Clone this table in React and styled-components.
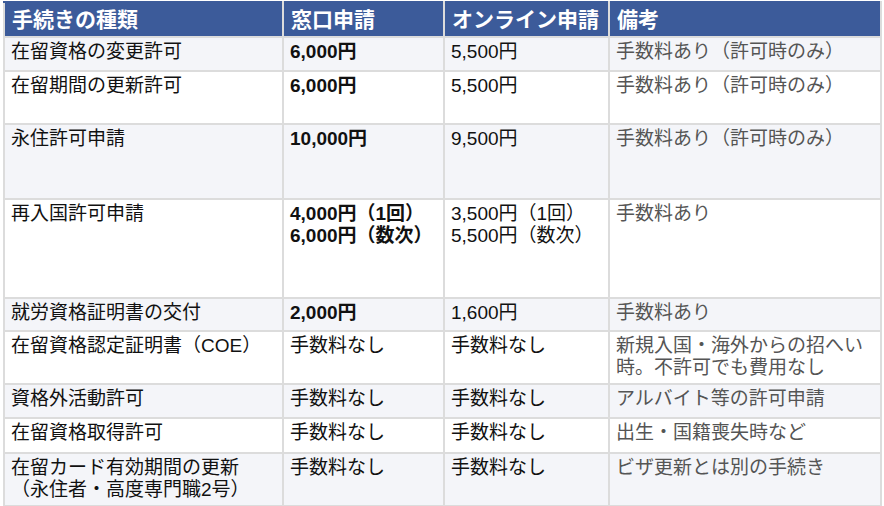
import React from 'react';
import styled, { createGlobalStyle } from 'styled-components';

const GlobalStyle = createGlobalStyle`
  html, body {
    margin: 0;
    padding: 0;
    background: #ffffff;
  }
  body {
    font-family: "Liberation Sans", "Noto Sans CJK JP", sans-serif;
  }
`;

const Wrapper = styled.div`
  padding: 1px 0 0 3px;
`;

const Table = styled.table`
  border-collapse: collapse;
  table-layout: fixed;
  width: 877px;
`;

const Col = styled.col`
  width: ${props => props.w}px;
`;

const HeadCell = styled.th`
  background: #3c5b9a;
  color: #ffffff;
  font-size: 21px;
  font-weight: 700;
  text-align: left;
  vertical-align: middle;
  padding: 0 5px 0 7px;
  border: 2px solid #dcdcdc;
  border-top-color: #3c5b9a;
  line-height: 24px;
  white-space: nowrap;
`;

const Row = styled.tr`
  height: ${props => props.h}px;
  background: ${props => (props.alt ? '#f4f5f9' : '#ffffff')};
`;

const Cell = styled.td`
  border: 2px solid #dcdcdc;
  padding: 3px 4px 0 6px;
  vertical-align: top;
  font-size: 19px;
  line-height: 22px;
  color: ${props => (props.note ? '#555555' : '#111111')};
  font-weight: ${props => (props.bold ? 700 : 400)};
`;

const rows = [
  { h: 34, name: ['在留資格の変更許可'], counter: ['6,000円'], online: ['5,500円'], note: ['手数料あり（許可時のみ）'] },
  { h: 53, name: ['在留期間の更新許可'], counter: ['6,000円'], online: ['5,500円'], note: ['手数料あり（許可時のみ）'] },
  { h: 75, name: ['永住許可申請'], counter: ['10,000円'], online: ['9,500円'], note: ['手数料あり（許可時のみ）'] },
  { h: 99, name: ['再入国許可申請'], counter: ['4,000円（1回）', '6,000円（数次）'], online: ['3,500円（1回）', '5,500円（数次）'], note: ['手数料あり'] },
  { h: 33, name: ['就労資格証明書の交付'], counter: ['2,000円'], online: ['1,600円'], note: ['手数料あり'] },
  { h: 53, name: ['在留資格認定証明書（COE）'], counter: ['手数料なし'], online: ['手数料なし'], note: ['新規入国・海外からの招へい', '時。不許可でも費用なし'], plainCounter: true },
  { h: 34, name: ['資格外活動許可'], counter: ['手数料なし'], online: ['手数料なし'], note: ['アルバイト等の許可申請'], plainCounter: true },
  { h: 35, name: ['在留資格取得許可'], counter: ['手数料なし'], online: ['手数料なし'], note: ['出生・国籍喪失時など'], plainCounter: true },
  { h: 53, name: ['在留カード有効期間の更新', '（永住者・高度専門職2号）'], counter: ['手数料なし'], online: ['手数料なし'], note: ['ビザ更新とは別の手続き'], plainCounter: true },
];

const Lines = ({ items }) =>
  items.map((t, i) => (
    <React.Fragment key={i}>
      {i > 0 && <br />}
      {t}
    </React.Fragment>
  ));

const App = () => {
  return (
    <Wrapper>
      <GlobalStyle />
      <Table>
        <colgroup>
          <Col w={279} />
          <Col w={161} />
          <Col w={165} />
          <Col w={272} />
        </colgroup>
        <thead>
          <Row h={35}>
            <HeadCell>手続きの種類</HeadCell>
            <HeadCell>窓口申請</HeadCell>
            <HeadCell>オンライン申請</HeadCell>
            <HeadCell>備考</HeadCell>
          </Row>
        </thead>
        <tbody>
          {rows.map((r, i) => (
            <Row key={i} h={r.h} alt={i % 2 === 0}>
              <Cell><Lines items={r.name} /></Cell>
              <Cell bold={!r.plainCounter}><Lines items={r.counter} /></Cell>
              <Cell><Lines items={r.online} /></Cell>
              <Cell note><Lines items={r.note} /></Cell>
            </Row>
          ))}
        </tbody>
      </Table>
    </Wrapper>
  );
};

export default App;
